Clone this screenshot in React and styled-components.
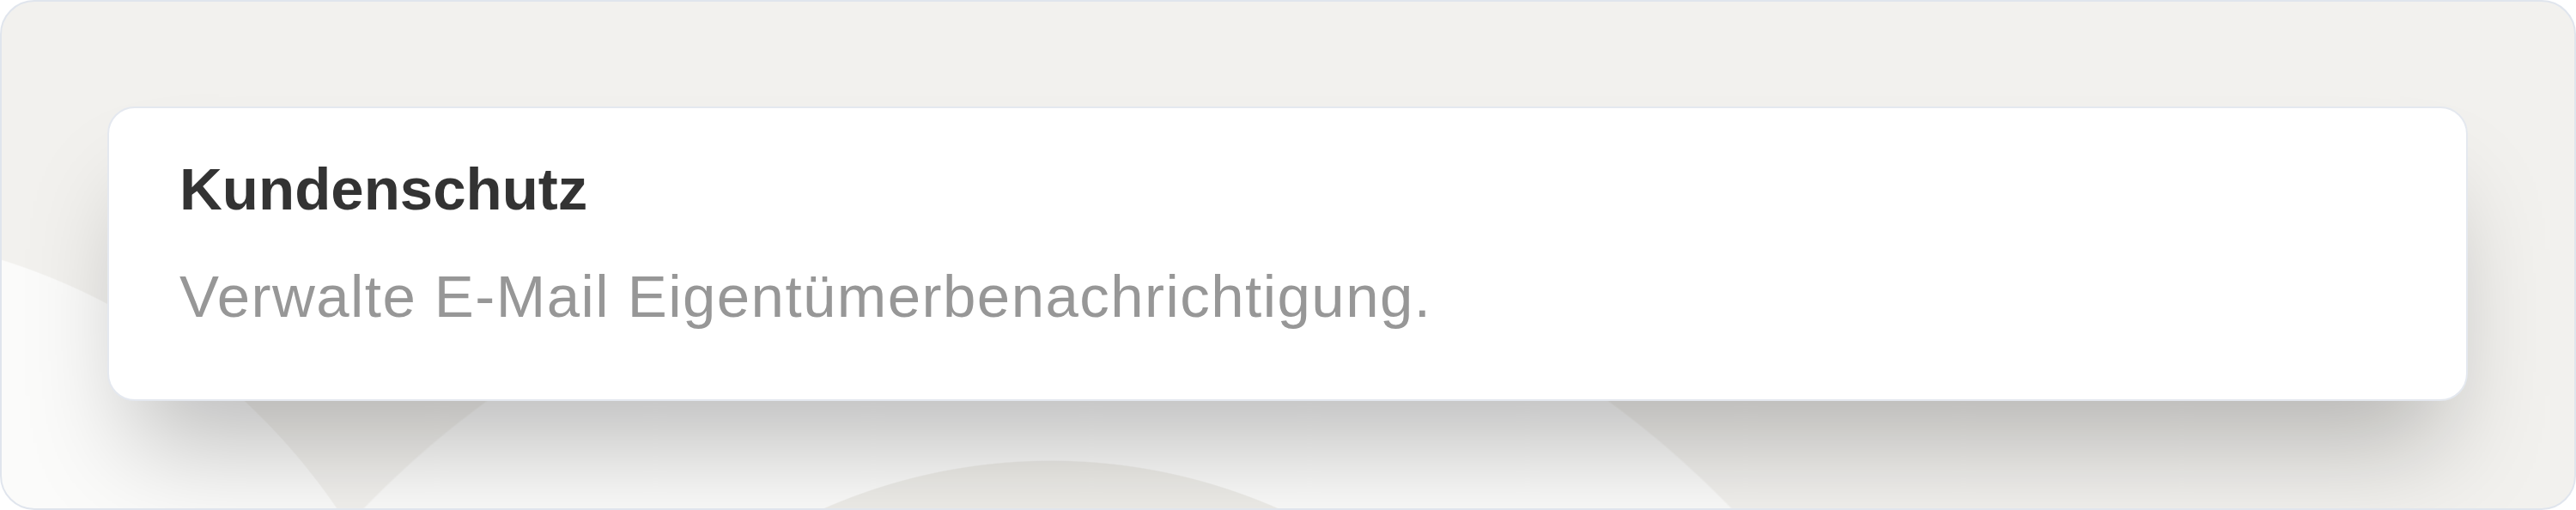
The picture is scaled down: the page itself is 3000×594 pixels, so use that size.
import styled, { createGlobalStyle } from 'styled-components';

const GlobalStyle = createGlobalStyle`
    html, body {
        margin:0;
        padding:0;
        background:#ffffff;
    }
    * {
        box-sizing:border-box;
    }
`;

const Frame = styled.div`
    width:3000px;
    height:594px;
    border:2px solid #e0e5ed;
    border-radius:40px;
    overflow:hidden;
    padding:122px 124px 0 123px;
    background-color:#f2f1ee;
    background-image:
        radial-gradient(circle 658px at 1222px 1192px, #eeede9 99.8%, transparent 100%),
        radial-gradient(circle 1108px at 1218px 1359px, #fbfbfa 99.8%, transparent 100%),
        radial-gradient(circle 742px at -222px 1008px, #fbfbfa 99.8%, transparent 100%);
    font-family:"Liberation Sans", Arial, sans-serif;
`;

const Card = styled.section`
    background:#ffffff;
    border:2px solid #e4e8ef;
    border-radius:32px;
    box-shadow:0 80px 120px -30px rgba(0,0,0,.25);
    padding:55px 80px 79px 82px;
    display:flex;
    flex-direction:column;
    gap:45px;
`;

const Title = styled.h2`
    margin:0;
    font-size:69px;
    line-height:80px;
    font-weight:700;
    color:#333333;
`;

const Description = styled.p`
    margin:0;
    font-size:69px;
    line-height:80px;
    font-weight:400;
    letter-spacing:1.45px;
    color:#979797;
`;

const App = () => {
    return (
        <>
            <GlobalStyle />
            <Frame>
                <Card>
                    <Title>Kundenschutz</Title>
                    <Description>Verwalte E-Mail Eigentümerbenachrichtigung.</Description>
                </Card>
            </Frame>
        </>
    )
}

export default App;
